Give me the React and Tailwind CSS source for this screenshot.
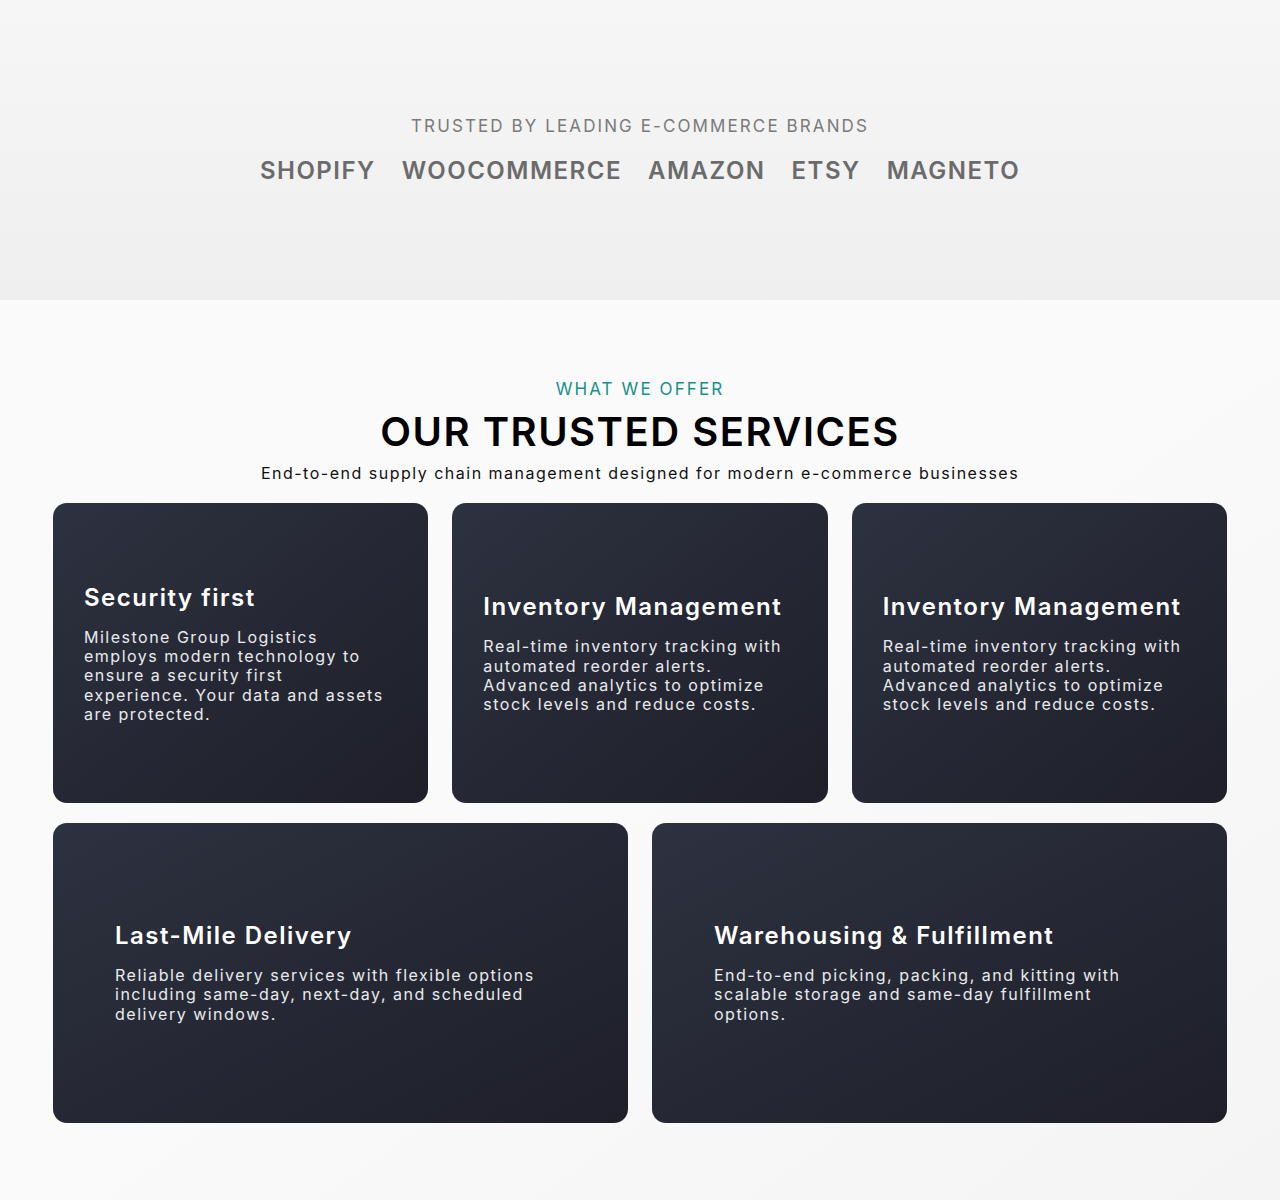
export default function App() {
  const row1 = [
    {
      t: "Security first",
      d: "Milestone Group Logistics employs modern technology to ensure a security first experience. Your data and assets are protected.",
    },
    {
      t: "Inventory Management",
      d: "Real-time inventory tracking with automated reorder alerts. Advanced analytics to optimize stock levels and reduce costs.",
    },
    {
      t: "Inventory Management",
      d: "Real-time inventory tracking with automated reorder alerts. Advanced analytics to optimize stock levels and reduce costs.",
    },
  ];
  const row2 = [
    {
      t: "Last-Mile Delivery",
      d: "Reliable delivery services with flexible options including same-day, next-day, and scheduled delivery windows.",
    },
    {
      t: "Warehousing & Fulfillment",
      d: "End-to-end picking, packing, and kitting with scalable storage and same-day fulfillment options.",
    },
  ];
  const brands = ["SHOPIFY", "WOOCOMMERCE", "AMAZON", "ETSY", "MAGNETO"];
  return (
    <div className="w-full font-['Inter',_sans-serif]">
      <section className="h-[300px] flex flex-col items-center justify-center bg-gradient-to-b from-[#f6f6f6] to-[#efefef]">
        <p className="text-[17px] tracking-[2.1px] text-[#7a7a7a] leading-none">
          TRUSTED BY LEADING E-COMMERCE BRANDS
        </p>
        <div className="mt-[24px] flex gap-[26px]">
          {brands.map((b) => (
            <span key={b} className="text-[24px] font-semibold tracking-[1.5px] text-[#6b6b6b] leading-none">
              {b}
            </span>
          ))}
        </div>
      </section>
      <section className="bg-gradient-to-br from-[#fafafa] via-[#fafafa] to-[#f4f4f4] pt-[81px] pb-[77px]">
        <div className="w-[1174px] mx-auto flex flex-col items-center">
          <p className="text-[17px] tracking-[2.1px] text-[#16918a] leading-none">WHAT WE OFFER</p>
          <h2 className="mt-[14px] text-[40px] font-semibold tracking-[1.5px] text-black leading-none">
            OUR TRUSTED SERVICES
          </h2>
          <p className="mt-[13px] text-[16px] tracking-[1.5px] text-[#111] leading-none">
            End-to-end supply chain management designed for modern e-commerce businesses
          </p>
          <div className="mt-[22px] w-full grid grid-cols-3 gap-x-[24px]">
            {row1.map((c, i) => (
              <div
                key={i}
                className="h-[300px] rounded-[14px] bg-gradient-to-br from-[#2d3240] to-[#1e1f29] pl-[31px] pr-[40px] pt-[2px] flex flex-col justify-center"
              >
                <h3 className="text-[24px] font-semibold tracking-[1.5px] text-white leading-[28px]">{c.t}</h3>
                <p className="mt-[16px] text-[16px] tracking-[1.5px] text-[#eaebee] leading-[19.3px]">{c.d}</p>
              </div>
            ))}
          </div>
          <div className="mt-[20px] w-full grid grid-cols-2 gap-x-[24px]">
            {row2.map((c, i) => (
              <div
                key={i}
                className="h-[300px] rounded-[14px] bg-gradient-to-br from-[#2d3240] to-[#1e1f29] px-[62px] flex flex-col justify-center"
              >
                <h3 className="text-[24px] font-semibold tracking-[1.5px] text-white leading-[28px]">{c.t}</h3>
                <p className="mt-[16px] text-[16px] tracking-[1.5px] text-[#eaebee] leading-[19.3px] max-w-[448px]">
                  {c.d}
                </p>
              </div>
            ))}
          </div>
        </div>
      </section>
    </div>
  );
}
